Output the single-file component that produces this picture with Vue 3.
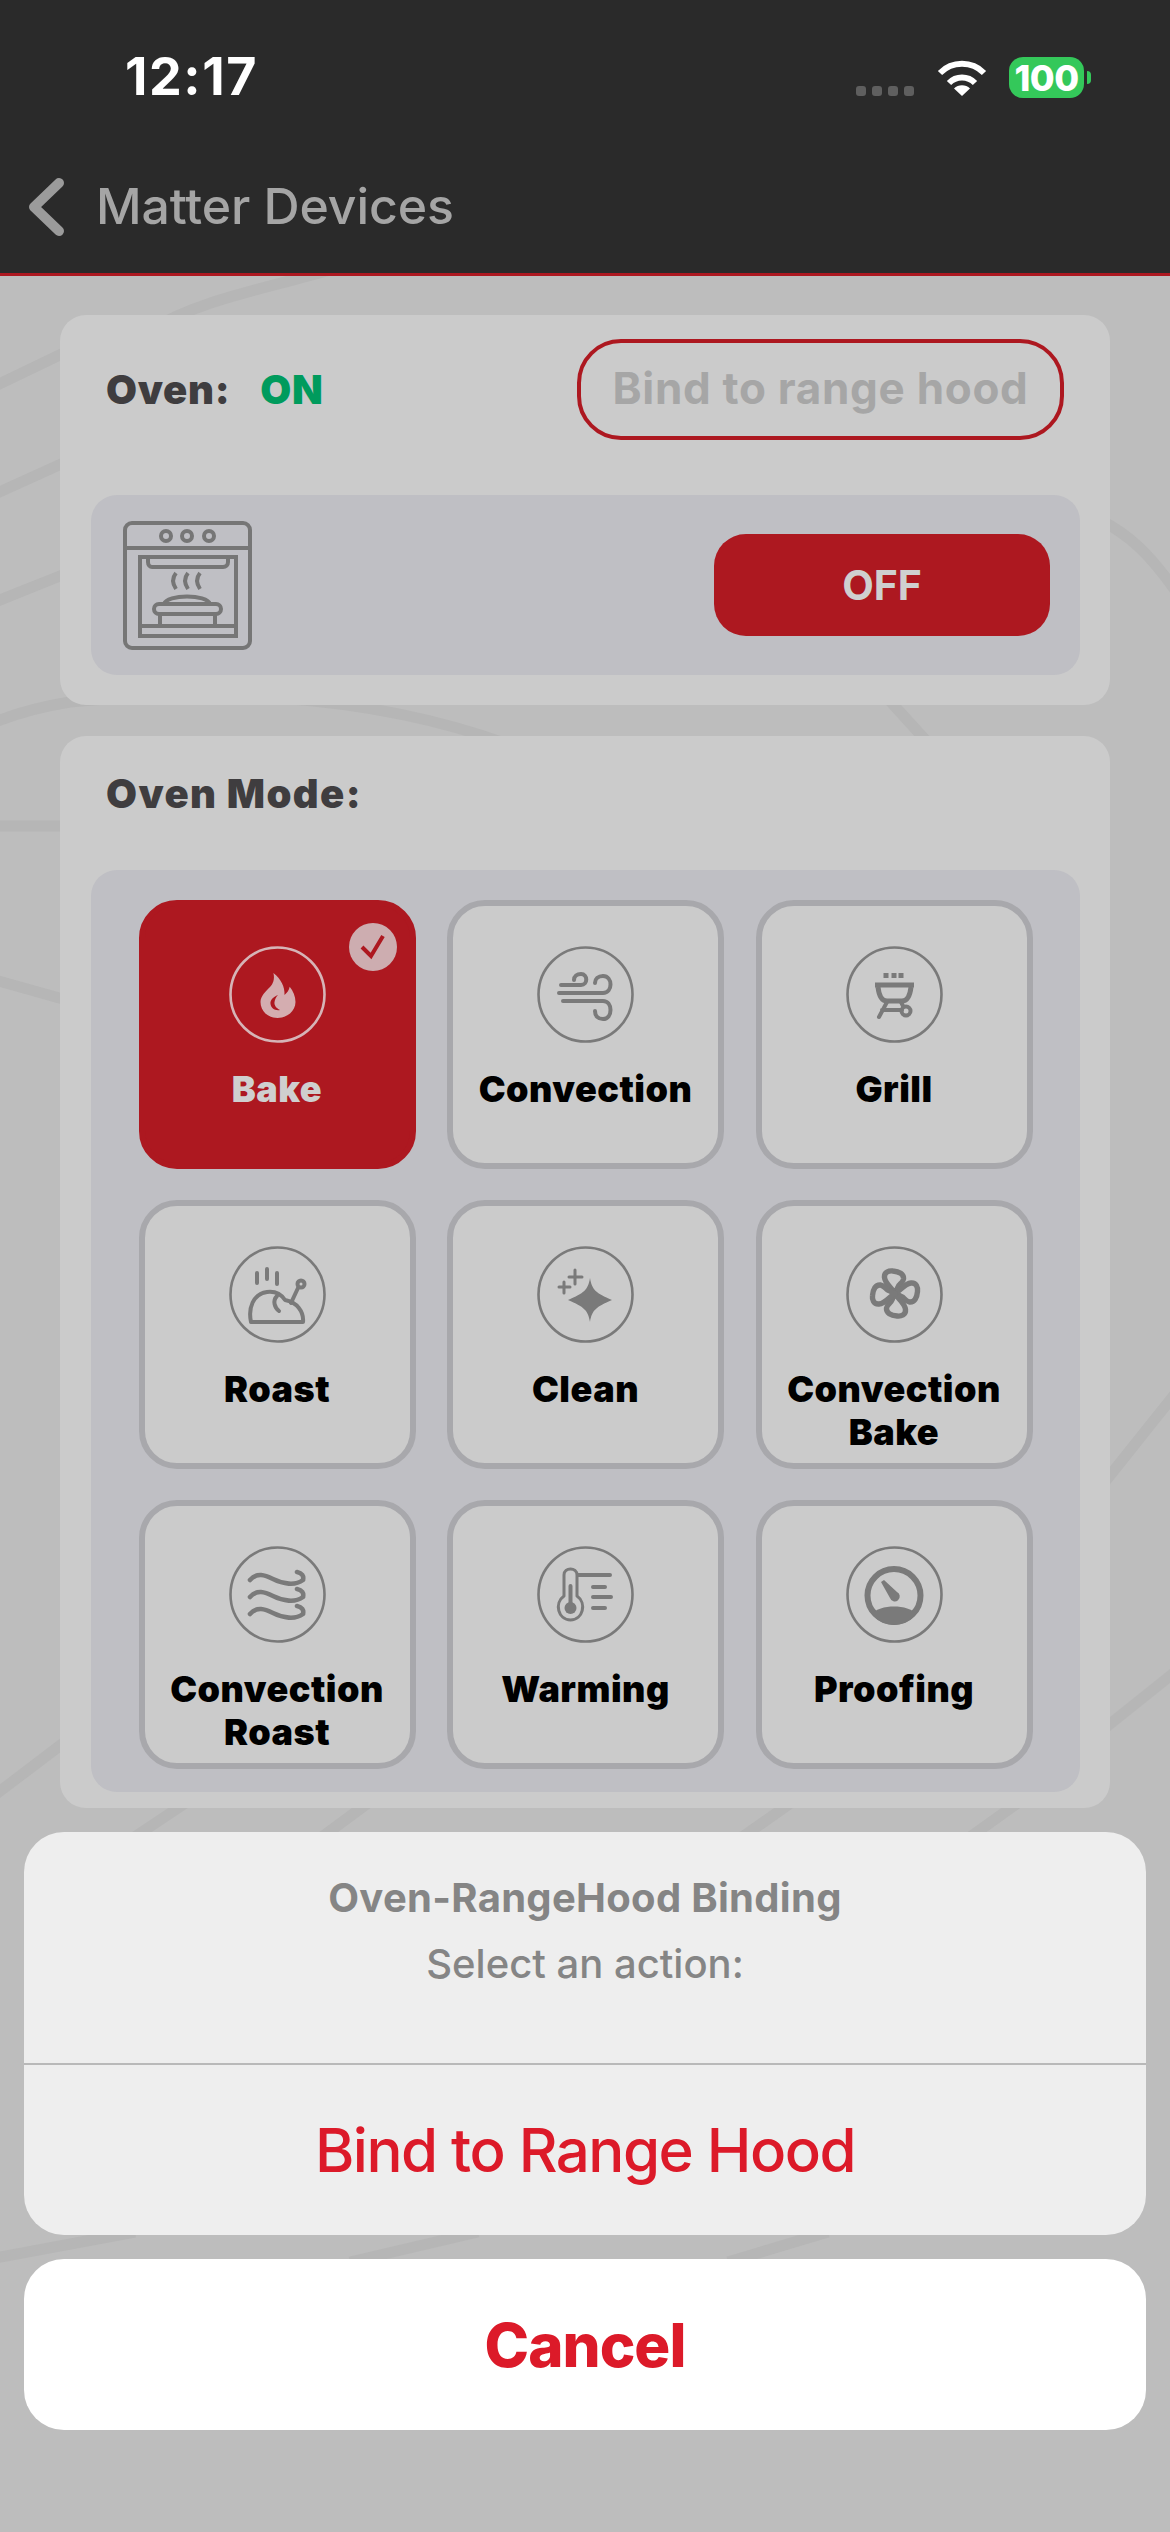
<script setup>
const modes = [
  { id: 'flame', label: 'Bake', active: true },
  { id: 'wind', label: 'Convection' },
  { id: 'grill', label: 'Grill' },
  { id: 'roast', label: 'Roast' },
  { id: 'clean', label: 'Clean' },
  { id: 'fan', label: 'Convection Bake' },
  { id: 'waves', label: 'Convection Roast' },
  { id: 'thermo', label: 'Warming' },
  { id: 'gauge', label: 'Proofing' }
]
const streaks = [
  'M150 330 C200 300 260 290 330 270',
  'M-5 386 L70 350',
  'M-5 494 L70 460',
  'M-5 602 L70 572',
  'M-5 722 C20 712 45 706 70 702 C200 690 360 690 510 745',
  'M880 690 L930 745',
  'M1100 520 C1130 535 1150 555 1175 590',
  'M-5 826 L70 826',
  'M-5 980 L70 1001',
  'M-5 1795 L70 1738',
  'M1100 1488 L1175 1394',
  'M1100 1732 L1175 1672',
  'M130 1840 L190 1800',
  'M318 1840 L372 1800',
  'M738 1840 L795 1800',
  'M966 1840 L1022 1800',
  'M-5 2258 L135 2232',
  'M350 2262 L478 2232',
  'M728 2262 L828 2232'
]
</script>

<template>
  <div class="screen">
    <svg class="pattern" viewBox="0 0 1170 2532" aria-hidden="true">
      <path v-for="d in streaks" :key="d" :d="d" />
    </svg>

    <header class="topbar">
      <div class="status">
        <span class="time">12:17</span>
        <div class="status-right">
          <div class="signal"><i></i><i></i><i></i><i></i></div>
          <svg class="wifi" viewBox="0 0 50 37">
            <path d="M3 14 A31 31 0 0 1 47 14" />
            <path d="M12 24 A18 18 0 0 1 38 24" />
            <path class="wifi-dot" d="M25 37 L17 29.5 A11.5 11.5 0 0 1 33 29.5 Z" />
          </svg>
          <div class="battery"><span>100</span></div>
          <div class="nub"></div>
        </div>
      </div>
      <div class="nav">
        <svg class="chevron" viewBox="0 0 36 58"><path d="M31 5 L6 29 L31 53" /></svg>
        <span class="nav-title">Matter Devices</span>
      </div>
    </header>

    <main class="content">
      <section class="card oven-card">
        <div class="oven-row">
          <div class="oven-state"><span class="oven-name">Oven:</span><span class="oven-on">ON</span></div>
          <button class="bind">Bind to range hood</button>
        </div>
        <div class="panel oven-panel">
          <svg class="oven-icon" viewBox="0 0 129 129">
            <rect x="2" y="2" width="125" height="125" rx="7" />
            <path d="M2 27 H127" />
            <circle cx="43" cy="15" r="5" /><circle cx="64" cy="15" r="5" /><circle cx="86" cy="15" r="5" />
            <rect x="17" y="36" width="96" height="79" />
            <path d="M25 37 V41 C25 44 27 46 29 46 H100 C103 46 105 44 105 41 V37" />
            <path d="M53 52 C49 57 49 62 53 68 M65 52 C61 57 61 62 65 68 M77 52 C73 57 73 62 77 68" />
            <path d="M41 83 C44 73 84 73 87 83" />
            <rect x="31" y="83" width="67" height="10" rx="5" />
            <path d="M37 93 V105 M92 93 V105 M17 105 H113" />
          </svg>
          <button class="off">OFF</button>
        </div>
      </section>

      <section class="card mode-card">
        <h2 class="mode-title">Oven Mode:</h2>
        <div class="panel mode-grid">
          <div v-for="m in modes" :key="m.id" class="tile" :class="{ active: m.active }">
            <svg v-if="m.active" class="check" viewBox="0 0 48 48">
              <circle cx="24" cy="24" r="24" />
              <path d="M13 24 L22 33 L34 13" />
            </svg>
            <svg class="mode-icon" viewBox="0 0 97 97">
              <circle class="ring" cx="48.5" cy="48.5" r="47" />
              <template v-if="m.id === 'flame'">
                <path class="solid" fill-rule="evenodd" d="M44.4 27 C52 33 56 41 55.5 49 C58 47 60 44 60.7 40.7 C64 45 66.5 50 66.5 56 C66.5 65 58 72 48.5 72 C39 72 31.5 65 31.5 56 C31.5 50 37 45 41 41 C44 38 46 33 44.4 27 Z M49 49 C44 51 41 54 41.5 58 C42 62 46 65 51 64 C47 62 45 59 45.5 56 C46 53 47 51 49 49 Z" />
              </template>
              <template v-else-if="m.id === 'wind'">
                <path d="M24 39 H44 C51 39 51 28 44 28 C40 28 37 30 37 34" />
                <path d="M22 47 H66 C76 47 76 30 66 30 C61 30 58 33 58 37" />
                <path d="M26 55 H66 C76 55 76 73 66 73 C61 73 58 70 58 65" />
              </template>
              <template v-else-if="m.id === 'grill'">
                <path class="thick" d="M40 27 V32 M48 27 V32 M55 27 V32 M29 39 H68" />
                <path class="thick" d="M32 41 C33 50 36 55 41 55 H56 C61 55 64 50 65 41" />
                <path d="M41 56 L33 71 M36 64 H56 M55 56 L57 60" />
                <circle cx="60" cy="65" r="4.5" />
              </template>
              <template v-else-if="m.id === 'roast'">
                <path d="M28 27 V37 M38 23 V33 M48 27 V38" />
                <path d="M22 76 C19 62 24 48 38 46 C46 45 52 48 56 54 C68 56 75 66 74 76 Z" />
                <path d="M48 50 C43 55 46 62 50 65 M62 57 L69 42" />
                <circle cx="72" cy="38" r="3.5" />
              </template>
              <template v-else-if="m.id === 'clean'">
                <path class="solid" d="M53 32 C55 44 59 47 75 54 C59 61 55 64 53 76 C51 64 47 61 31 54 C47 47 51 44 53 32 Z" />
                <path class="thin" d="M38 24 V38 M32 31 H45 M27 36 V47 M22 41 H33" />
              </template>
              <template v-else-if="m.id === 'fan'">
                <g v-for="r in [0, 90, 180, 270]" :key="r" :transform="`rotate(${r} 49 47.5)`">
                  <path class="fan-petal" d="M49 47.5 C47 43 39 38 38.5 31.5 C38 26 43 24.5 47 25 C53 25.5 58 28 57.5 33 C57 37 53 38 52 41 C51.5 43 50 45 49 47.5 Z" />
                </g>
              </template>
              <template v-else-if="m.id === 'waves'">
                <g v-for="y in [0, 17, 34]" :key="y" :transform="`translate(0 ${y})`">
                  <path class="petal" d="M21 34 C28 26 36 29 44 33 C54 38 66 40 74 34 M68 26 C73 27 75 30 74 34" />
                </g>
              </template>
              <template v-else-if="m.id === 'thermo'">
                <path class="thin" d="M27 50 V29 C27 21 40 21 40 29 V50 C50 57 46 74 33.5 74 C21 74 17 57 27 50 Z" />
                <path d="M33.5 40 V60 M41 29 H73 M56 41 H68 M56 51 H74 M56 62 H68" />
                <circle class="solid" cx="33.5" cy="62" r="6" />
              </template>
              <template v-else>
                <circle class="bold" cx="48" cy="49.5" r="26.5" />
                <path class="solid" d="M26 68 C33 58 63 58 70 68 C65 75 56 79 48 79 C40 79 31 75 26 68 Z" />
                <path class="solid" d="M35 36 L38 34 L51 46 A5 5 0 1 1 44 52 Z" />
              </template>
            </svg>
            <span class="tile-label">{{ m.label }}</span>
          </div>
        </div>
      </section>
    </main>

    <div class="sheet-wrap">
      <div class="sheet">
        <div class="sheet-head">
          <div class="sheet-title">Oven-RangeHood Binding</div>
          <div class="sheet-sub">Select an action:</div>
        </div>
        <button class="sheet-action">Bind to Range Hood</button>
      </div>
      <button class="sheet-cancel">Cancel</button>
    </div>
  </div>
</template>

<style scoped>
.screen {
  position: relative;
  width: 1170px;
  height: 2532px;
  overflow: hidden;
  background: #bdbdbd;
  font-family: Inter, "Liberation Sans", sans-serif;
}
.pattern {
  position: absolute;
  inset: 0;
  width: 1170px;
  height: 2532px;
}
.pattern path {
  fill: none;
  stroke: #b6b6b6;
  stroke-width: 11;
}
.topbar {
  position: relative;
  height: 273px;
  background: #2a2a2a;
  border-bottom: 3px solid #ad1820;
  box-sizing: content-box;
}
.status {
  height: 154px;
  padding: 50px 79px 0 125px;
  box-sizing: border-box;
  display: flex;
  justify-content: space-between;
  align-items: flex-start;
}
.time {
  color: #fff;
  font-size: 52px;
  line-height: 54px;
  font-weight: 700;
  letter-spacing: 1.6px;
}
.status-right {
  display: flex;
  align-items: flex-start;
  padding-top: 7px;
}
.signal {
  display: flex;
  gap: 6px;
  margin-top: 29px;
  margin-right: 23px;
}
.signal i {
  width: 10px;
  height: 10px;
  border-radius: 3px;
  background: #5f5f5f;
}
.wifi {
  width: 50px;
  height: 37px;
  margin-top: 2px;
  margin-right: 22px;
}
.wifi path {
  fill: none;
  stroke: #fff;
  stroke-width: 6;
}
.wifi .wifi-dot {
  fill: #fff;
  stroke: none;
}
.battery {
  width: 75px;
  height: 41px;
  border-radius: 14px;
  background: #34c85a;
  display: flex;
  align-items: center;
  justify-content: center;
  color: #fff;
  font-size: 36px;
  font-weight: 800;
  letter-spacing: -0.5px;
}
.nub {
  width: 4px;
  height: 13px;
  margin: 14px 0 0 3px;
  border-radius: 0 4px 4px 0;
  background: #34c85a;
}
.nav {
  height: 119px;
  display: flex;
  align-items: flex-start;
  padding-left: 28px;
}
.chevron {
  width: 36px;
  height: 58px;
  margin-top: 24px;
}
.chevron path {
  fill: none;
  stroke: #9b9b9b;
  stroke-width: 10;
  stroke-linecap: round;
  stroke-linejoin: round;
}
.nav-title {
  margin-left: 32px;
  margin-top: 22px;
  color: #a5a5a5;
  font-size: 50px;
  line-height: 60px;
  font-weight: 500;
  letter-spacing: -0.1px;
}
.content {
  position: relative;
  padding: 39px 60px 0;
  display: flex;
  flex-direction: column;
  gap: 31px;
}
.card {
  background: #cbcbcb;
  border-radius: 26px;
  padding: 24px 30px 30px 31px;
}
.panel {
  background: #bfbfc4;
  border-radius: 26px;
}
.oven-row {
  height: 101px;
  margin-bottom: 55px;
  padding: 0 16px 0 15px;
  display: flex;
  align-items: center;
  justify-content: space-between;
}
.oven-state {
  display: flex;
  gap: 30px;
  font-size: 40px;
  font-weight: 900;
  letter-spacing: 0.7px;
}
.oven-name {
  color: #3f3d3f;
}
.oven-on {
  color: #009b5d;
}
.bind {
  width: 487px;
  height: 101px;
  box-sizing: border-box;
  border: 4px solid #ad1820;
  border-radius: 44px;
  background: none;
  color: #a6a6a6;
  font-family: inherit;
  font-size: 44px;
  font-weight: 700;
  letter-spacing: 0.7px;
  padding: 0 0 3px;
}
.oven-panel {
  height: 180px;
  padding: 0 30px 0 32px;
  display: flex;
  align-items: center;
  justify-content: space-between;
}
.oven-icon {
  width: 129px;
  height: 129px;
}
.oven-icon * {
  fill: none;
  stroke: #767676;
  stroke-width: 4;
}
.off {
  width: 336px;
  height: 102px;
  border: none;
  border-radius: 32px;
  background: #ad1820;
  color: #cfcfcf;
  font-family: inherit;
  font-size: 41px;
  font-weight: 700;
}
.mode-card {
  padding-top: 0;
  padding-bottom: 16px;
}
.mode-title {
  margin: 0;
  height: 134px;
  padding: 35px 0 0 15px;
  box-sizing: border-box;
  font-size: 40px;
  line-height: 46px;
  font-weight: 900;
  letter-spacing: 1.4px;
  color: #3f3d3f;
}
.mode-grid {
  padding: 30px 0 23px;
  display: grid;
  grid-template-columns: repeat(3, 277px);
  column-gap: 31.5px;
  row-gap: 31px;
  justify-content: center;
}
.tile {
  position: relative;
  height: 269px;
  box-sizing: border-box;
  border: 6px solid #a8a8ac;
  border-radius: 38px;
  background: #cbcbcb;
  padding: 40px 8px 0;
  display: flex;
  flex-direction: column;
  align-items: center;
}
.tile.active {
  background: #ad1820;
  border-color: #ad1820;
}
.check {
  position: absolute;
  top: 17px;
  right: 13px;
  width: 48px;
  height: 48px;
}
.check circle {
  fill: #cdadb0;
}
.check path {
  fill: none;
  stroke: #ad1820;
  stroke-width: 4;
}
.mode-icon {
  width: 97px;
  height: 97px;
  flex: none;
}
.mode-icon * {
  fill: none;
  stroke: #7a7a7a;
  stroke-width: 4;
  stroke-linecap: round;
  stroke-linejoin: round;
}
.mode-icon .ring {
  stroke-width: 2.6;
}
.mode-icon .thin {
  stroke-width: 3;
}
.mode-icon .petal {
  stroke-width: 4.6;
}
.mode-icon .fan-petal {
  stroke-width: 5.4;
}
.mode-icon .thick {
  stroke-width: 5;
  stroke-linecap: butt;
}
.mode-icon .bold {
  stroke-width: 6;
}
.mode-icon .solid {
  fill: #7a7a7a;
  stroke: none;
}
.active .mode-icon .ring {
  stroke: #d6b4b7;
}
.active .mode-icon .solid {
  fill: #d4adb0;
}
.tile-label {
  margin-top: 25px;
  text-align: center;
  color: #000;
  font-size: 36px;
  line-height: 43px;
  font-weight: 900;
  letter-spacing: 0.5px;
}
.active .tile-label {
  color: #cfcfcf;
}
.sheet-wrap {
  position: absolute;
  left: 24px;
  right: 24px;
  top: 1832px;
  display: flex;
  flex-direction: column;
  gap: 24px;
}
.sheet {
  background: #eeeeee;
  border-radius: 40px;
  overflow: hidden;
}
.sheet-head {
  height: 233px;
  box-sizing: border-box;
  padding-top: 43px;
  border-bottom: 2px solid #b9b9b9;
  text-align: center;
  color: #858585;
  font-size: 40px;
  line-height: 46px;
}
.sheet-title {
  font-weight: 700;
  letter-spacing: 0.3px;
}
.sheet-sub {
  margin-top: 20px;
  font-weight: 500;
}
.sheet-action,
.sheet-cancel {
  display: block;
  width: 100%;
  border: none;
  color: #dc1a29;
  font-family: inherit;
  font-size: 60px;
  padding: 0;
}
.sheet-action {
  height: 170px;
  background: none;
  font-weight: 550;
  letter-spacing: -1.5px;
}
.sheet-cancel {
  height: 171px;
  border-radius: 40px;
  background: #fff;
  font-weight: 800;
  letter-spacing: -1px;
}
</style>
